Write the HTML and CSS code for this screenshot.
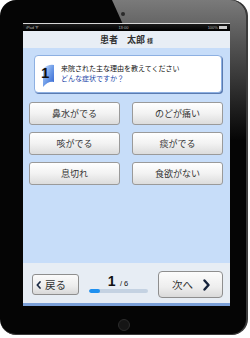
FILE: index.html
```html
<!DOCTYPE html>
<html lang="ja">
<head>
<meta charset="utf-8">
<title>問診</title>
<link rel="stylesheet" href="styles.css">
</head>
<body>
<div class="ipad">
  <div class="reflection"></div>
  <div class="camera"></div>
  <div class="screen">
    <div class="statusbar">
      <span class="sb-left">iPad <span class="wifi">ᯤ</span></span>
      <span class="sb-center">13:00</span>
      <span class="sb-right">100% <span class="battery"></span></span>
    </div>
    <div class="header">患者　太郎 <span class="sama">様</span></div>
    <div class="content">
      <div class="question">
        <div class="qnum">
          <svg class="flag" viewBox="0 0 12 25" width="12" height="25">
            <defs>
              <linearGradient id="fg" x1="0" y1="0" x2="1" y2="1">
                <stop offset="0" stop-color="#c8dcfa"/>
                <stop offset="0.5" stop-color="#6f9de8"/>
                <stop offset="1" stop-color="#2d5fcf"/>
              </linearGradient>
            </defs>
            <path d="M1 7 Q6 2 12 3 L12 20 Q6 19 1 25 Z" fill="url(#fg)"/>
          </svg>
          <span class="num">1</span>
        </div>
        <div class="qtext">
          <div class="q1">来院された主な理由を教えてください</div>
          <div class="q2">どんな症状ですか？</div>
        </div>
      </div>
      <div class="choices">
        <button class="choice">鼻水がでる</button>
        <button class="choice">のどが痛い</button>
        <button class="choice">咳がでる</button>
        <button class="choice">痰がでる</button>
        <button class="choice">息切れ</button>
        <button class="choice">食欲がない</button>
      </div>
    </div>
    <div class="footer">
      <button class="back">
        <svg class="chev" viewBox="0 0 5 8" width="5" height="8"><path d="M4 1 L1.3 4 L4 7" fill="none" stroke="#1b2a44" stroke-width="1.7" stroke-linecap="round" stroke-linejoin="round"/></svg>
        <span>戻る</span>
      </button>
      <div class="progress">
        <div class="count"><span class="cur">1</span> <span class="tot">/ 6</span></div>
        <div class="bar"><div class="fill" style="width:18%"></div></div>
      </div>
      <button class="next">
        <span>次へ</span>
        <svg class="chev2" viewBox="0 0 7 12" width="7" height="12"><path d="M1.5 1.5 L5.5 6 L1.5 10.5" fill="none" stroke="#14223a" stroke-width="2.4" stroke-linecap="round" stroke-linejoin="round"/></svg>
      </button>
    </div>
  </div>
  <div class="home"></div>
</div>
</body>
</html>
```
FILE: styles.css
```css
html, body {
  margin: 0;
  padding: 0;
  background: #ffffff;
}
body {
  width: 250px;
  height: 338px;
  overflow: hidden;
  font-family: "Noto Sans CJK JP", "Noto Sans", sans-serif;
}
.ipad {
  position: relative;
  width: 248px;
  height: 335px;
  box-sizing: border-box;
  background: #050505;
  border-radius: 16px;
  border-right: 2px solid #3c3c3c;
  border-bottom: 1px solid #3a3a3a;
  padding: 23px 0 0 23px;
  display: flex;
  flex-direction: column;
}
.reflection {
  position: absolute;
  left: 0;
  top: 0;
  right: 0;
  height: 140px;
  border-top-right-radius: 16px;
  background: linear-gradient(180deg, #7a7a7a 0%, #555 30%, rgba(40,40,40,0) 100%);
  clip-path: polygon(112px 0, 100% 0, 100% 100%, 175px 100%);
}
.camera {
  position: absolute;
  left: 121px;
  top: 12px;
  width: 4px;
  height: 4px;
  border-radius: 50%;
  background: #2a2a2a;
}
.screen {
  position: relative;
  z-index: 1;
  width: 207px;
  height: 283px;
  display: flex;
  flex-direction: column;
  background: #c7ddf9;
}
.statusbar {
  height: 8px;
  background: linear-gradient(180deg, #d8d8d8 0, #d8d8d8 1px, #1a1a1a 1px, #000 100%);
  display: flex;
  justify-content: space-between;
  align-items: center;
  padding: 1px 3px 0;
  box-sizing: border-box;
  color: #bbb;
  font-family: "Liberation Sans", sans-serif;
  font-size: 4px;
  line-height: 6px;
}
.battery {
  display: inline-block;
  width: 8px;
  height: 3px;
  background: #ccc;
  vertical-align: middle;
}
.header {
  height: 17px;
  background: #e8eef5;
  text-align: center;
  font-size: 9px;
  font-weight: bold;
  color: #333;
  line-height: 17px;
}
.sama {
  font-size: 6px;
}
.content {
  flex: 1;
  padding: 7px 7px 0 6px;
}
.question {
  margin-left: 5px;
  margin-right: 1px;
  height: 38px;
  box-sizing: border-box;
  background: #fff;
  border: 1px solid #8db0e2;
  border-radius: 4px;
  box-shadow: 1px 1px 0 #5b7bb0;
  display: flex;
  align-items: center;
  padding-left: 7px;
}
.qnum {
  position: relative;
  width: 12px;
  height: 25px;
  margin-right: 7px;
}
.flag {
  display: block;
}
.num {
  position: absolute;
  left: -1px;
  top: 2px;
  font-family: "Liberation Sans", sans-serif;
  font-weight: bold;
  font-size: 15px;
  line-height: 18px;
  color: #111;
}
.qtext {
  font-size: 7px;
  line-height: 10px;
  margin-top: -2px;
}
.q1 {
  color: #111;
}
.q2 {
  color: #2447a8;
}
.choices {
  margin-top: 9px;
  display: grid;
  grid-template-columns: 91px 91px;
  grid-auto-rows: 23px;
  column-gap: 12px;
  row-gap: 7px;
}
.choice {
  margin: 0;
  padding: 0;
  font-family: inherit;
  font-size: 9px;
  color: #333;
  background: linear-gradient(180deg, #ffffff 0%, #f2f2f2 50%, #dcdcdc 100%);
  border: 1px solid #9a9a9a;
  border-radius: 3px;
}
.footer {
  height: 40px;
  background: #e7edf4;
  border-bottom: 3px solid #7ba0d8;
  display: flex;
  align-items: flex-start;
  gap: 10px;
  padding-left: 9px;
}
.back {
  margin: 11px 0 0;
  padding: 0 0 0 3px;
  width: 47px;
  height: 21px;
  font-family: inherit;
  font-size: 10.5px;
  color: #333;
  background: linear-gradient(180deg, #fbfbfb 0%, #ececec 60%, #d8d8d8 100%);
  border: 1px solid #8e8e8e;
  border-radius: 3px;
  display: flex;
  align-items: center;
  gap: 4px;
}
.chev {
  display: block;
}
.progress {
  width: 59px;
  margin-top: 9px;
  display: flex;
  flex-direction: column;
  align-items: center;
}
.count {
  height: 17px;
  font-family: "Liberation Sans", sans-serif;
  color: #111;
  line-height: 17px;
  margin-left: -1px;
}
.cur {
  font-size: 14px;
  font-weight: bold;
}
.tot {
  font-size: 7.5px;
}
.bar {
  align-self: stretch;
  height: 4px;
  border-radius: 2px;
  background: #c4d2e2;
  overflow: hidden;
}
.fill {
  height: 100%;
  border-radius: 2px;
  background: #1e90f0;
}
.next {
  margin: 8px 0 0;
  padding: 0 0 0 13px;
  width: 65px;
  height: 27px;
  font-family: inherit;
  font-size: 10.5px;
  color: #333;
  background: linear-gradient(180deg, #fcfcfc 0%, #eeeeee 60%, #dadada 100%);
  border: 1px solid #8e8e8e;
  border-radius: 4px;
  display: flex;
  align-items: center;
  gap: 10px;
}
.chev2 {
  display: block;
}
.home {
  margin: 13px 0 0 95px;
  width: 10px;
  height: 10px;
  border-radius: 50%;
  background: #151515;
  border: 1px solid #2c2c2c;
}
```
